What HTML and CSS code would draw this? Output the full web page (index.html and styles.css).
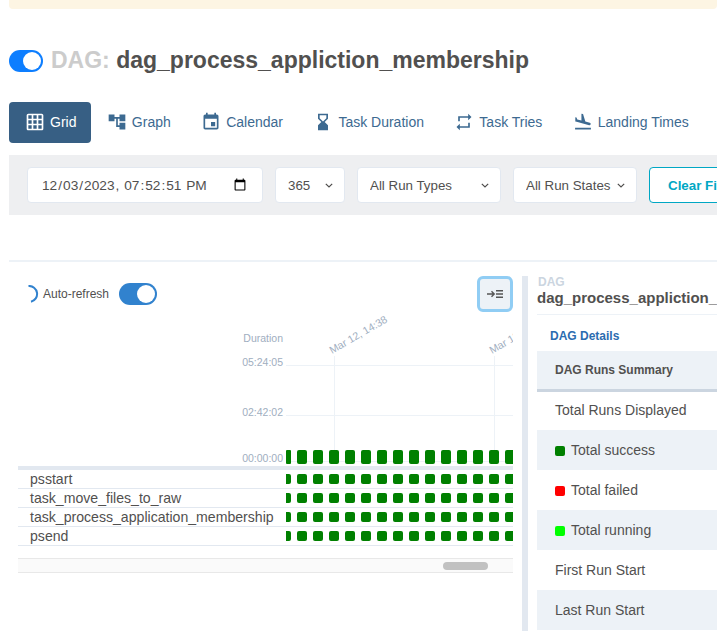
FILE: index.html
```html
<!DOCTYPE html>
<html>
<head>
    <title>dag_process_appliction_membership - Grid</title>
    <link rel="stylesheet" href="styles.css">
</head>
<body>
    <div class="alert"></div>

    <div class="title-row">
        <span class="toggle toggle-dag"><span class="knob"></span></span>
        <h1 class="title"><span class="title-muted">DAG:</span> dag_process_appliction_membership</h1>
    </div>

    <nav class="nav">
        <a class="nav-item active">
            <svg class="nav-icon" viewBox="0 0 24 24"><path d="M20 2H4c-1.1 0-2 .9-2 2v16c0 1.1.9 2 2 2h16c1.1 0 2-.9 2-2V4c0-1.1-.9-2-2-2zM8 20H4v-4h4v4zm0-6H4v-4h4v4zm0-6H4V4h4v4zm6 12h-4v-4h4v4zm0-6h-4v-4h4v4zm0-6h-4V4h4v4zm6 12h-4v-4h4v4zm0-6h-4v-4h4v4zm0-6h-4V4h4v4z"/></svg>
            Grid
        </a>
        <a class="nav-item">
            <svg class="nav-icon" viewBox="0 0 24 24"><path d="M22 11V3h-7v3H9V3H2v8h7V8h2v10h4v3h7v-8h-7v3h-2V8h2v3z"/></svg>
            Graph
        </a>
        <a class="nav-item">
            <svg class="nav-icon" viewBox="0 0 24 24"><path d="M17 12h-5v5h5v-5zM16 1v2H8V1H6v2H5c-1.11 0-1.99.9-1.99 2L3 19c0 1.1.89 2 2 2h14c1.1 0 2-.9 2-2V5c0-1.1-.9-2-2-2h-1V1h-2zm3 18H5V8h14v11z"/></svg>
            Calendar
        </a>
        <a class="nav-item">
            <svg class="nav-icon" viewBox="0 0 24 24"><path d="M18 22l-.01-6L14 12l3.99-4.01L18 2H6v6l4 4-4 3.99V22h12zM8 7.5V4h8v3.5l-4 4-4-4z"/></svg>
            Task Duration
        </a>
        <a class="nav-item">
            <svg class="nav-icon" viewBox="0 0 24 24"><path d="M7 7h10v3l4-4-4-4v3H5v6h2V7zm10 10H7v-3l-4 4 4 4v-3h12v-6h-2v4z"/></svg>
            Task Tries
        </a>
        <a class="nav-item">
            <svg class="nav-icon" viewBox="0 0 24 24"><path d="M2.5 19h19v2h-19zm7.18-5.73l4.35 1.16 5.31 1.42c.8.21 1.62-.26 1.84-1.06.21-.8-.26-1.62-1.06-1.84l-5.31-1.42-2.76-9.02L10.12 2v8.28L5.15 8.95l-.93-2.32-1.45-.39v5.17l1.6.43 5.31 1.43z"/></svg>
            Landing Times
        </a>
    </nav>

    <form class="filters">
        <input class="field field-date" type="datetime-local" step="1" value="2023-12-03T19:52:51">
        <select class="field field-select field-count"><option>365</option></select>
        <select class="field field-select field-types"><option>All Run Types</option></select>
        <select class="field field-select field-states"><option>All Run States</option></select>
        <button class="clear-btn" type="button">Clear Filters</button>
    </form>

    <div class="divider"></div>

    <div class="main">
        <section class="grid-panel">
            <div class="grid-top">
                <div class="refresh">
                    <svg class="spinner" viewBox="0 0 12 18"><path d="M1.500 1A8 8 0 0 1 4 16.750"/></svg>
                    <span class="refresh-label">Auto-refresh</span>
                    <span class="toggle toggle-refresh"><span class="knob"></span></span>
                </div>
                <button class="collapse-btn" type="button">
                    <svg viewBox="0 0 16 8" width="16" height="8"><path d="M0 4h6.500M4.500 1.300 7.200 4 4.500 6.700M9 .8h7M9 4h7M9 7.200h7"/></svg>
                </button>
            </div>

            <svg class="chart" width="495" height="151" viewBox="18 315 495 151">
                <g class="chart-lines">
                    <path d="M286 365.500H513M286 415.500H513M286 461.500H513M334.500 356V461M494.500 356V461"/>
                </g>
                <g class="chart-text">
                    <text x="283" y="342" text-anchor="end">Duration</text>
                    <text x="283" y="366" text-anchor="end">05:24:05</text>
                    <text x="283" y="416" text-anchor="end">02:42:02</text>
                    <text x="283" y="462" text-anchor="end">00:00:00</text>
                    <text transform="translate(332 354) rotate(-30)">Mar 12, 14:38</text>
                    <text transform="translate(492 354) rotate(-30)">Mar 12, 14:38</text>
                </g>
                <g class="chart-bars">
                    <rect x="286" y="450" width="5" height="14" rx="1"/>
                    <rect x="297" y="450" width="10" height="14" rx="2"/>
                    <rect x="313" y="450" width="10" height="14" rx="2"/>
                    <rect x="329" y="450" width="10" height="14" rx="2"/>
                    <rect x="345" y="450" width="10" height="14" rx="2"/>
                    <rect x="361" y="450" width="10" height="14" rx="2"/>
                    <rect x="377" y="450" width="10" height="14" rx="2"/>
                    <rect x="393" y="450" width="10" height="14" rx="2"/>
                    <rect x="409" y="450" width="10" height="14" rx="2"/>
                    <rect x="425" y="450" width="10" height="14" rx="2"/>
                    <rect x="441" y="450" width="10" height="14" rx="2"/>
                    <rect x="457" y="450" width="10" height="14" rx="2"/>
                    <rect x="473" y="450" width="10" height="14" rx="2"/>
                    <rect x="489" y="450" width="10" height="14" rx="2"/>
                    <rect x="505" y="450" width="10" height="14" rx="2"/>
                </g>
            </svg>

            <div class="tasks">
                <div class="task-row">
                    <span class="task-name">psstart</span>
                    <div class="cells"><i></i><i></i><i></i><i></i><i></i><i></i><i></i><i></i><i></i><i></i><i></i><i></i><i></i><i></i><i></i></div>
                </div>
                <div class="task-row">
                    <span class="task-name">task_move_files_to_raw</span>
                    <div class="cells"><i></i><i></i><i></i><i></i><i></i><i></i><i></i><i></i><i></i><i></i><i></i><i></i><i></i><i></i><i></i></div>
                </div>
                <div class="task-row">
                    <span class="task-name">task_process_application_membership</span>
                    <div class="cells"><i></i><i></i><i></i><i></i><i></i><i></i><i></i><i></i><i></i><i></i><i></i><i></i><i></i><i></i><i></i></div>
                </div>
                <div class="task-row">
                    <span class="task-name">psend</span>
                    <div class="cells"><i></i><i></i><i></i><i></i><i></i><i></i><i></i><i></i><i></i><i></i><i></i><i></i><i></i><i></i><i></i></div>
                </div>
            </div>

            <div class="scroll-track"><span class="scroll-thumb"></span></div>
        </section>

        <div class="gutter"></div>

        <section class="details">
            <div class="details-head">
                <div class="details-label">DAG</div>
                <div class="details-name">dag_process_appliction_membership</div>
            </div>
            <div class="details-link">DAG Details</div>
            <table class="summary">
                <tr><th>DAG Runs Summary</th></tr>
                <tr><td>Total Runs Displayed</td></tr>
                <tr><td><span class="dot success"></span>Total success</td></tr>
                <tr><td><span class="dot failed"></span>Total failed</td></tr>
                <tr><td><span class="dot running"></span>Total running</td></tr>
                <tr><td>First Run Start</td></tr>
                <tr><td>Last Run Start</td></tr>
            </table>
        </section>
    </div>
</body>
</html>
```

FILE: styles.css
```css
html, body {
    height: 631px;
    overflow: hidden;
}

body {
    margin: 0;
    font-family: "Liberation Sans", Arial, sans-serif;
    color: #51504f;
    background-color: #fff;
}

.alert {
    height: 9px;
    margin-left: 9px;
    background-color: #fdf5e3;
    border-radius: 0 0 4px 4px;
}

/* title */
.title-row {
    display: flex;
    align-items: center;
    gap: 8px;
    height: 22px;
    margin: 41px 0 0 9px;
}

.title {
    margin: 0 0 2px;
    font-size: 23px;
    line-height: 22px;
    font-weight: bold;
    white-space: nowrap;
}

.title-muted {
    color: #ccc;
}

.toggle {
    display: flex;
    justify-content: flex-end;
    align-items: center;
    box-sizing: border-box;
    border-radius: 11px;
    padding: 2px;
}

.toggle-dag {
    width: 34px;
    height: 22px;
    background-color: #0d7eff;
}

.toggle-refresh {
    width: 38px;
    height: 22px;
    margin-left: 10px;
    background-color: #3182ce;
}

.knob {
    width: 18px;
    height: 18px;
    border-radius: 50%;
    background-color: #fff;
}

/* tabs */
.nav {
    display: flex;
    height: 41px;
    margin: 30px 0 0 9px;
}

.nav-item {
    display: flex;
    align-items: center;
    gap: 5px;
    padding: 0 14.400px 1px 16px;
    font-size: 14px;
    color: #3d6a91;
    border-radius: 4px;
    white-space: nowrap;
}

.nav-item.active {
    background-color: #375f84;
    color: #fff;
}

.nav-icon {
    width: 20px;
    height: 20px;
    fill: currentColor;
}

/* filters */
.filters {
    display: flex;
    gap: 12px;
    box-sizing: border-box;
    height: 60px;
    margin: 12px 0 0 9px;
    padding: 12px 18px;
    background-color: #eeeff1;
    overflow: hidden;
}

.field {
    box-sizing: border-box;
    height: 36px;
    flex: none;
    background-color: #fff;
    border: 1px solid #e2e8f0;
    border-radius: 4px;
    font-family: "Liberation Sans", Arial, sans-serif;
    font-size: 13.333px;
    color: #51504f;
}

.field-date {
    width: 236px;
    padding: 0 13px;
    font-size: 13.700px;
}

.field-select {
    appearance: none;
    padding: 0 12px;
    background-image: url("data:image/svg+xml,%3Csvg xmlns='http://www.w3.org/2000/svg' width='8' height='5' viewBox='0 0 8 5'%3E%3Cpath d='M.8.8 4 4 7.200.8' fill='none' stroke='%2351504f' stroke-width='1.200'/%3E%3C/svg%3E");
    background-repeat: no-repeat;
    background-position: right 11px center;
}

.field-count {
    width: 70px;
}

.field-types {
    width: 144px;
}

.field-states {
    width: 124px;
}

.clear-btn {
    flex: none;
    width: 120px;
    height: 36px;
    padding: 0 0 0 18px;
    text-align: left;
    background-color: #fff;
    border: 1px solid #00a7c4;
    border-radius: 4px;
    font-family: "Liberation Sans", Arial, sans-serif;
    font-size: 13.333px;
    font-weight: bold;
    color: #00a7c4;
}

.divider {
    height: 2px;
    margin: 45px 0 0 9px;
    background-color: #edf2f7;
}

/* main split */
.main {
    display: flex;
    height: 369px;
    margin: -1px 0 0 18px;
    padding-top: 15px;
    box-sizing: border-box;
}

.grid-panel {
    flex: none;
    width: 495px;
}

.grid-top {
    display: flex;
    justify-content: space-between;
    height: 36px;
}

.refresh {
    display: flex;
    align-items: center;
    height: 22px;
    margin-top: 7px;
    padding-left: 9px;
    font-size: 12px;
}

.spinner {
    width: 12px;
    height: 18px;
    margin-right: 4px;
    fill: none;
    stroke: #3182ce;
    stroke-width: 2;
}

.refresh-label {
    white-space: nowrap;
}

.collapse-btn {
    display: flex;
    align-items: center;
    justify-content: center;
    box-sizing: border-box;
    width: 36px;
    height: 36px;
    padding: 0;
    background-color: #edf2f7;
    border: 3px solid #90cdf4;
    border-radius: 6px;
}

.collapse-btn path {
    fill: none;
    stroke: #555;
    stroke-width: 1.400;
}

.chart {
    display: block;
    margin-top: 3px;
}

.chart-lines path {
    fill: none;
    stroke: #edf2f7;
    stroke-width: 1;
}

.chart-text text {
    font-size: 10.500px;
    fill: #a0aec0;
}

.chart-bars rect {
    fill: #008000;
}

.tasks {
    border-top: 4px solid #e2e8f0;
}

.task-row {
    display: flex;
    align-items: center;
    box-sizing: border-box;
    height: 19px;
    border-bottom: 1px solid #e2e8f0;
}

.task-name {
    flex: none;
    box-sizing: border-box;
    width: 268px;
    padding-left: 12px;
    font-size: 14.100px;
    white-space: nowrap;
}

.cells {
    display: flex;
    gap: 6px;
    flex: 1;
    overflow: hidden;
}

.cells i {
    flex: none;
    width: 10px;
    height: 10px;
    background-color: #008000;
    border-radius: 2px;
}

.cells i:first-child {
    margin-left: -5px;
}

.scroll-track {
    box-sizing: border-box;
    height: 15px;
    margin-top: 12px;
    padding: 3px 0 0 425px;
    background-color: #fafafa;
    border-top: 1px solid #e8e8e8;
    border-bottom: 1px solid #e8e8e8;
}

.scroll-thumb {
    display: block;
    width: 45px;
    height: 8px;
    background-color: #c1c1c1;
    border-radius: 4px;
}

.gutter {
    flex: none;
    width: 6px;
    height: 355px;
    margin-left: 9px;
    background-color: #e2e8f0;
}

/* right side */
.details {
    flex: 1;
    min-width: 0;
    margin-left: 9px;
}

.details-head {
    box-sizing: border-box;
    height: 39px;
    border-bottom: 1px solid #edf2f7;
    overflow: hidden;
}

.details-label {
    padding-left: 1px;
    font-size: 12px;
    line-height: 13px;
    font-weight: bold;
    color: #cbd5e0;
}

.details-name {
    font-size: 15px;
    line-height: 17px;
    font-weight: bold;
    white-space: nowrap;
}

.details-link {
    height: 36px;
    padding-left: 13px;
    font-size: 12px;
    line-height: 43px;
    font-weight: bold;
    color: #2b6cb0;
}

.summary {
    width: 100%;
    border-collapse: collapse;
    font-size: 14px;
}

.summary th {
    box-sizing: border-box;
    height: 39px;
    padding: 0 0 0 18px;
    font-size: 12px;
    text-align: left;
    background-color: #edf2f7;
    border-bottom: 3px solid #cbd5e0;
}

.summary td {
    box-sizing: border-box;
    height: 40px;
    padding: 0 0 0 18px;
    white-space: nowrap;
}

.summary tr:nth-child(2) td {
    padding-bottom: 2px;
}

.summary tr:nth-child(odd) td {
    background-color: #edf2f7;
}

.dot {
    display: inline-block;
    width: 10px;
    height: 10px;
    margin-right: 6px;
    border-radius: 2px;
    vertical-align: -1px;
}

.success {
    background-color: #008000;
}

.failed {
    background-color: #f00;
}

.running {
    background-color: #0f0;
}
```
